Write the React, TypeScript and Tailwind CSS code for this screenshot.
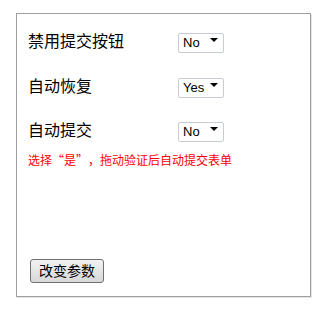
import React, { useState } from 'react';

const font = { fontFamily: '"Liberation Sans", "Noto Sans CJK SC", sans-serif' };
const cjk = { fontFamily: '"Noto Sans CJK SC", "Liberation Sans", sans-serif' };

// Small dropdown with the classic black triangle
const YesNo: React.FC<{ value: string; onChange: (v: string) => void }> = ({ value, onChange }) => (
  <div className="relative w-[46px] h-[20px]">
    <select
      value={value}
      onChange={(e) => onChange(e.target.value)}
      className="appearance-none w-full h-full border border-[#c8ccd4] rounded-[2px] bg-white pl-[4px] text-[13px] leading-[18px] text-black outline-none"
      style={font}
    >
      <option value="No">No</option>
      <option value="Yes">Yes</option>
    </select>
    <svg className="absolute right-[6px] top-[8px] pointer-events-none" width="8" height="4" viewBox="0 0 8 4">
      <path d="M0 0 L8 0 L4 4 Z" fill="#000" />
    </svg>
  </div>
);

const App: React.FC = () => {
  const [disableBtn, setDisableBtn] = useState('No');
  const [autoRestore, setAutoRestore] = useState('Yes');
  const [autoSubmit, setAutoSubmit] = useState('No');

  const rows = [
    { label: '禁用提交按钮', value: disableBtn, set: setDisableBtn, mb: 'mb-[25px]' },
    { label: '自动恢复', value: autoRestore, set: setAutoRestore, mb: 'mb-[24px]' },
    { label: '自动提交', value: autoSubmit, set: setAutoSubmit, mb: 'mb-0' },
  ];

  return (
    <div className="w-[328px] h-[315px] bg-white pt-[13px] pl-[16px]" style={font}>
      <div className="w-[295px] h-[284px] border border-[#a0a0a0] shadow-[1px_1px_0_#e4e4e4] flex flex-col pl-[11px] pt-[16px]">
        {rows.map((r, i) => (
          <div key={i} className={`flex items-center h-[20px] ${r.mb}`}>
            <span className="w-[150px] shrink-0 text-[16px] text-black leading-[20px] pt-[3px]">{r.label}</span>
            <YesNo value={r.value} onChange={r.set} />
          </div>
        ))}
        <p className="text-[12px] text-[#ff0000] leading-[16px] mt-[13px] whitespace-nowrap" style={cjk}>
          选择<span className="inline-block w-[12px] text-right">“</span>是<span className="inline-block w-[12px] text-left">”</span>，拖动验证后自动提交表单
        </p>
        <button className="mt-auto mb-[13px] ml-[2px] w-[74px] h-[24px] border border-[#707070] rounded-[3px] bg-gradient-to-b from-[#f2f2f2] to-[#d8d8d8] text-[14px] text-black">
          改变参数
        </button>
      </div>
    </div>
  );
};

export default App;
